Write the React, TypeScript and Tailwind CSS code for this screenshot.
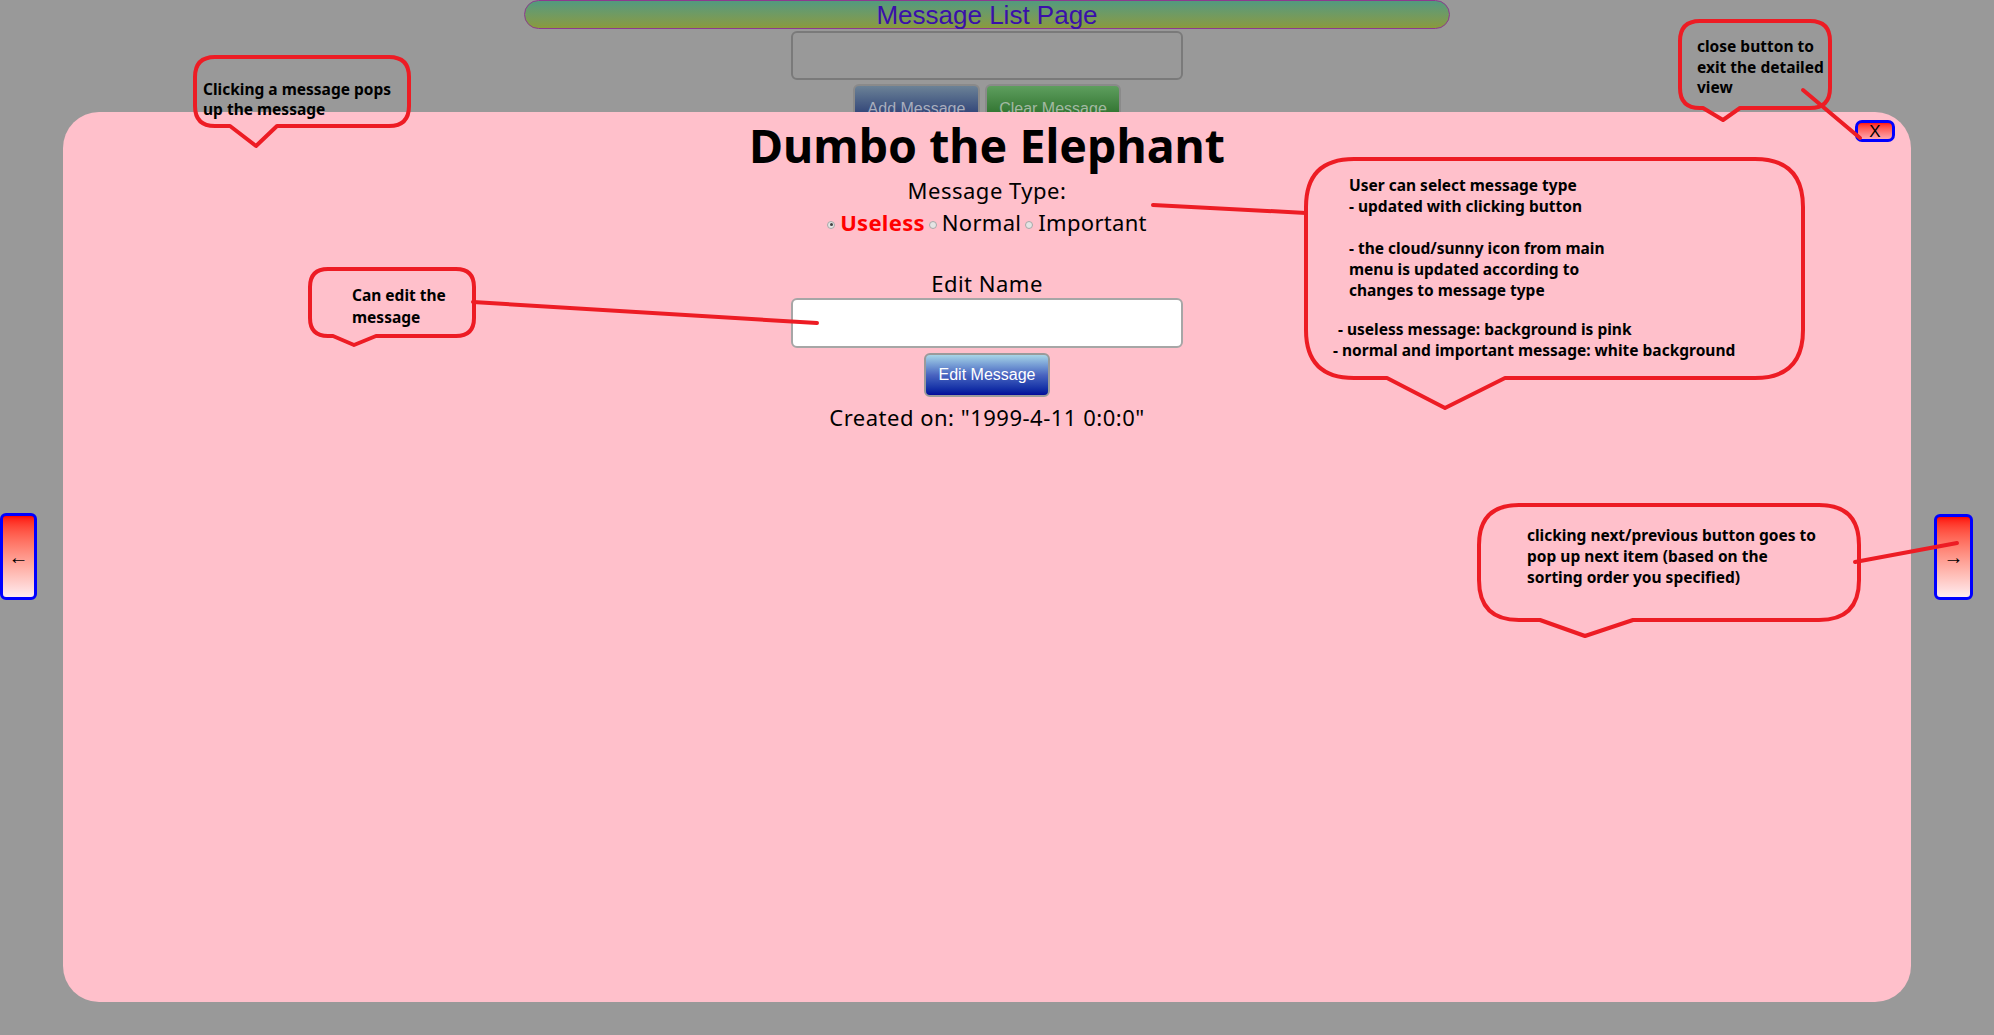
import React from 'react';

const RED = '#ed1c24';

// speech bubble outline: rounded box with a tail on the bottom edge
function bubble(x1: number, y1: number, x2: number, y2: number, r: number, tl: number, tx: number, ty: number, tr: number) {
  return `M${x1 + r},${y1} H${x2 - r} Q${x2},${y1} ${x2},${y1 + r} V${y2 - r} Q${x2},${y2} ${x2 - r},${y2} H${tr} L${tx},${ty} L${tl},${y2} H${x1 + r} Q${x1},${y2} ${x1},${y2 - r} V${y1 + r} Q${x1},${y1} ${x1 + r},${y1} Z`;
}

function Annotations() {
  return (
    <>
      <svg className="pointer-events-none absolute left-0 top-0" width={1994} height={1035}>
        <g fill="none" stroke={RED} strokeWidth={4} strokeLinejoin="round" strokeLinecap="round">
          <path d={bubble(195, 57, 409, 126, 20, 230, 256, 146, 277)} />
          <path d={bubble(1680, 21, 1830, 108, 20, 1703, 1723, 120, 1740)} />
          <path d={bubble(310, 269, 474, 336, 18, 333, 354, 345, 376)} />
          <path d={bubble(1306, 159, 1803, 378, 48, 1387, 1445, 408, 1505)} />
          <path d={bubble(1479, 505, 1859, 620, 40, 1540, 1585, 636, 1633)} />
          <path d="M1803 90 L1860 138" />
          <path d="M1153 205 L1306 213" />
          <path d="M473 302 L817 323" />
          <path d="M1855 562 L1957 543" />
        </g>
      </svg>

      <div className="absolute left-[203px] top-[79px] text-[15.5px] font-bold leading-[20px] text-black">
        Clicking a message pops<br />up the message
      </div>
      <div className="absolute left-[1697px] top-[36px] text-[15.5px] font-bold leading-[20.5px] text-black">
        close button to<br />exit the detailed<br />view
      </div>
      <div className="absolute left-[352px] top-[284px] text-[15.5px] font-bold leading-[22px] text-black">
        Can edit the<br />message
      </div>
      <div className="absolute left-[1333px] top-[175px] text-[15.5px] font-bold leading-[21px] text-black">
        <div className="pl-[16px]">User can select message type</div>
        <div className="pl-[16px]">- updated with clicking button</div>
        <div className="h-[21px]" />
        <div className="pl-[16px]">- the cloud/sunny icon from main</div>
        <div className="pl-[16px]">menu is updated according to</div>
        <div className="pl-[16px]">changes to message type</div>
        <div className="h-[18px]" />
        <div className="pl-[5px]">- useless message: background is pink</div>
        <div>- normal and important message: white background</div>
      </div>
      <div className="absolute left-[1527px] top-[525px] text-[15.5px] font-bold leading-[21px] text-black">
        clicking next/previous button goes to<br />pop up next item (based on the<br />sorting order you specified)
      </div>
    </>
  );
}

function Radio({ checked, label, bold }: { checked?: boolean; label: string; bold?: boolean }) {
  return (
    <label className="flex items-center">
      <span className="mr-[5px] mt-[5px] flex h-[8px] w-[8px] items-center justify-center rounded-full border border-[#a8a8a8] bg-[#e4e4e4]">
        {checked && <span className="h-[3px] w-[3px] rounded-full bg-[#444]" />}
      </span>
      <span className={bold ? 'font-bold text-[#ff0000]' : 'text-black'}>{label}</span>
    </label>
  );
}

export default function App() {
  return (
    <div
      className="relative h-[1035px] w-[1994px] overflow-hidden bg-[#999999]"
      style={{ fontFamily: '"Noto Sans", "Open Sans", sans-serif' }}
    >
      {/* page behind the popup, already dimmed */}
      <div className="flex w-[1974px] flex-col items-center" style={{ fontFamily: '"Liberation Sans", Arial, sans-serif' }}>
        <div className="flex h-[29px] w-[926px] items-center justify-center rounded-full border border-[#8c3a8e] bg-gradient-to-b from-[#529a7e] to-[#8a9a3c]">
          <span className="text-[26px] leading-none text-[#3a10aa]">Message List Page</span>
        </div>
        <div className="mt-[2px] h-[49px] w-[392px] rounded-[6px] border-2 border-[#7a7a7a] bg-[#999999]" />
        <div className="mt-[4px] flex gap-[5px]">
          <button className="h-[44px] w-[127px] rounded-[6px] border-2 border-[#8a8a8a] bg-gradient-to-b from-[#6c8296] to-[#1e2a6a] pt-[6px] text-[16px] leading-[18px] text-[#a9aebd]">
            Add Message
          </button>
          <button className="h-[44px] w-[136px] rounded-[6px] border-2 border-[#8a8a8a] bg-gradient-to-b from-[#5e9e5e] to-[#1c641c] pt-[6px] text-[16px] leading-[18px] text-[#a3b9a3]">
            Clear Message
          </button>
        </div>
      </div>

      {/* detail popup */}
      <div className="absolute left-[63px] top-[112px] flex h-[890px] w-[1848px] flex-col items-center rounded-[36px] bg-[#ffc0cb] pt-[5px] text-black">
        <button className="absolute right-[16px] top-[8px] flex h-[22px] w-[40px] items-center justify-center rounded-[7px] border-[3px] border-[#0000ff] bg-gradient-to-b from-[#ff1010] to-[#ffa4b0] text-[17px] leading-none" style={{ fontFamily: '"Liberation Sans", Arial, sans-serif' }}>
          X
        </button>
        <h1 className="text-[46.5px] font-bold leading-[56px]">Dumbo the Elephant</h1>
        <div className="mt-[3px] text-[22px] leading-[28px] tracking-[0.5px]">Message Type:</div>
        <div className="mt-[4px] flex gap-[4px] text-[22px] leading-[28px] tracking-[0.3px]">
          <Radio checked label="Useless" bold />
          <Radio label="Normal" />
          <Radio label="Important" />
        </div>
        <div className="mt-[33px] text-[22px] leading-[28px] tracking-[0.5px]">Edit Name</div>
        <input className="mt-[1px] h-[50px] w-[392px] rounded-[6px] border-2 border-[#a6a6a6] bg-white px-2 outline-none" />
        <button
          className="mt-[5px] h-[44px] w-[126px] rounded-[6px] border-2 border-[#9a9a9a] bg-gradient-to-b from-[#a9d5e6] via-[#4a64c0] to-[#06069a] text-[16px] text-white"
          style={{ fontFamily: '"Liberation Sans", Arial, sans-serif' }}
        >
          Edit Message
        </button>
        <div className="mt-[6px] text-[22px] leading-[28px] tracking-[0.5px]">Created on: "1999-4-11 0:0:0"</div>
      </div>

      {/* prev / next */}
      <button className="absolute left-0 top-[513px] flex h-[87px] w-[37px] items-center justify-center rounded-[6px] border-[3px] border-[#0000ff] bg-gradient-to-b from-[#ff0000] to-[#ffecf0] text-[20px]">
        ←
      </button>
      <button className="absolute left-[1934px] top-[514px] flex h-[86px] w-[39px] items-center justify-center rounded-[6px] border-[3px] border-[#0000ff] bg-gradient-to-b from-[#ff0000] to-[#ffecf0] text-[20px]">
        →
      </button>

      <Annotations />
    </div>
  );
}
